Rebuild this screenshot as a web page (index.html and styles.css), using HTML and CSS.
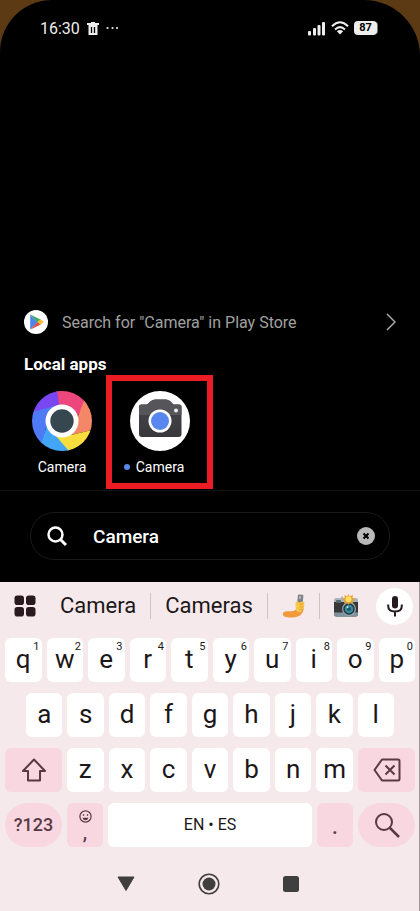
FILE: index.html
```
<!DOCTYPE html>
<html lang="en">

<head>
    <meta charset="utf-8" />
    <meta name="viewport" content="width=device-width, initial-scale=1" />
    <title>Camera search</title>
    <link rel="stylesheet" href="styles.css">
</head>

<body>
    <div class="screen">
        <header class="status">
            <span class="time">16:30</span>
            <svg class="trash" width="12" height="13" viewBox="0 0 12 13">
                <path d="M0 1h4V0h4v1h4v2H0z" fill="#eee" />
                <path d="M1.500 3h9v10h-9z" fill="#eee" />
                <path d="M4.500 5v6M7.500 5v6" stroke="#000" stroke-width="1.300" />
            </svg>
            <svg class="more" width="13" height="4" viewBox="0 0 13 4" fill="#eee">
                <circle cx="1.500" cy="2" r="1.100" />
                <circle cx="6.500" cy="2" r="1.100" />
                <circle cx="11" cy="2" r="1.100" />
            </svg>
            <svg class="signal" width="18" height="15" viewBox="0 0 18 15" fill="#eee">
                <rect x="0" y="10" width="3" height="4.500" rx="1" />
                <rect x="5" y="7" width="3" height="7.500" rx="1" />
                <rect x="9.500" y="4" width="3" height="10.500" rx="1" />
                <rect x="14" y="1" width="3" height="13.500" rx="1" />
            </svg>
            <svg class="wifi" width="18" height="14" viewBox="0 0 18 14" fill="none" stroke="#eee" stroke-width="2">
                <path d="M1 5.200Q9-2.600 17 5.200M4 8.400q5-4.600 10 0" />
                <path d="M9 13.500L5.800 10.300Q9 7.800 12.200 10.300z" fill="#eee" stroke="none" />
            </svg>
            <span class="battery">87</span>
        </header>

        <main class="results">
            <a class="store" href="#">
                <svg width="24" height="24" viewBox="0 0 24 24">
                    <circle cx="12" cy="12" r="12" fill="#fff" />
                    <path d="M6.200 4.800v14.600l7.400-7.200z" fill="#4b86e8" />
                    <path d="M6.200 4.500l10.800 5.200-3.400 2.800z" fill="#3fa865" />
                    <path d="M6.200 19.700l10.800-5.500-3.400-2.200z" fill="#e4483e" />
                    <path d="M16.300 9.300l3.700 2.800-3.700 2.500-3-2.500z" fill="#f4bc2f" />
                </svg>
                <span>Search for "Camera" in Play Store</span>
                <svg class="chevron" width="10" height="18" viewBox="0 0 10 18">
                    <path d="M1 1l8 8-8 8" fill="none" stroke="#aaa" stroke-width="1.500" />
                </svg>
            </a>

            <h2>Local apps</h2>
            <div class="apps">
                <button class="app" type="button">
                    <svg width="60" height="60" viewBox="0 0 60 60">
                        <defs>
                            <clipPath id="round"><circle cx="30" cy="30" r="30" /></clipPath>
                            <linearGradient id="body" x1="0" y1="0" x2="0" y2="1">
                                <stop offset="0" stop-color="#48484c" />
                                <stop offset="1" stop-color="#38383c" />
                            </linearGradient>
                        </defs>
                        <g clip-path="url(#round)">
                            <path d="M30 30L15 20-5 22V-5h30l14 20z" fill="#7847f2" />
                            <path d="M30 30L25 0H70L50 17 43 30z" fill="#ec467c" />
                            <path d="M35 15L25 0h-1l12 18 8 10 8-18-7-4z" fill="#ec467c" />
                            <path d="M52 10l13-5v38l-5-4-21 5 5-14z" fill="#f48768" />
                            <path d="M60 39l-21 5-18-2 16 20h28z" fill="#f9dc3d" />
                            <path d="M37 60L15 35 8 53l12 12h20z" fill="#42a5f5" />
                            <path d="M23 15L0 21v29l9 4 6-20z" fill="#4e79f7" />
                        </g>
                        <circle cx="30" cy="30" r="16.500" fill="#fff" />
                        <circle cx="30" cy="30" r="11.700" fill="#37474f" />
                    </svg>
                    <span class="name">Camera</span>
                </button>
                <button class="app picked" type="button">
                    <svg width="60" height="60" viewBox="0 0 60 60">
                        <circle cx="30" cy="30" r="30" fill="#fff" />
                        <path d="M9 16q0-2.500 2.500-2.500H17l4-3.500q2-1.500 4-1.500h11q2 0 4 1.500l3.500 3.500h5.500q2.500 0 2.500 2.500v27q0 3-3 3H12q-3 0-3-3z" fill="url(#body)" />
                        <path d="M9 24v-8q0-2.500 2.500-2.500H17l4-3.500q2-1.500 4-1.500h11q2 0 4 1.500l3.500 3.500h5.500q2.500 0 2.500 2.500v8z" fill="#56565a" />
                        <circle cx="30" cy="30" r="11.500" fill="#fff" />
                        <circle cx="30" cy="30" r="9" fill="#5787ef" />
                        <circle cx="46" cy="19.500" r="2" fill="#eee" />
                    </svg>
                    <span class="name dot">Camera</span>
                </button>
            </div>
        </main>

        <form class="search">
            <label class="field">
                <svg width="20" height="20" viewBox="0 0 20 20" fill="none" stroke="#fff" stroke-width="2.500">
                    <circle cx="8.500" cy="8.500" r="7" />
                    <path d="M13.500 13.500l5.500 5.500" stroke-width="3" />
                </svg>
                <input type="text" value="Camera" aria-label="Search apps">
                <button class="clear" type="button" aria-label="Clear">
                    <svg width="18" height="18" viewBox="0 0 18 18">
                        <circle cx="9" cy="9" r="9" fill="#b9b9b9" />
                        <path d="M6.500 6.500l5 5m0-5l-5 5" stroke="#000" stroke-width="2" />
                    </svg>
                </button>
            </label>
        </form>
    </div>

    <section class="keyboard">
        <div class="suggestions">
            <button class="tools" type="button" aria-label="Tools">
                <svg width="22" height="22" viewBox="0 0 22 22" fill="#291a1f">
                    <rect x="0.500" y="0.500" width="9.500" height="9.500" rx="2.800" />
                    <rect x="12" y="0.500" width="9.500" height="9.500" rx="2.800" />
                    <rect x="0.500" y="12" width="9.500" height="9.500" rx="2.800" />
                    <rect x="12" y="12" width="9.500" height="9.500" rx="2.800" />
                </svg>
            </button>
            <button class="word" type="button">Camera</button>
            <button class="word" type="button">Cameras</button>
            <button class="emoji" type="button" aria-label="Selfie">
                <svg width="24" height="24" viewBox="0 0 24 24">
                    <rect x="15.500" y="0.500" width="5.500" height="11" rx="1" fill="#7c8288" transform="rotate(5 18 6)" />
                    <rect x="17" y="2" width="2" height="3" rx="1" fill="#b6bdc2" />
                    <path d="M3.500 17.500c4-.8 8 .8 11-2.500l1.500-6 5.500 2.500c.8 4-.5 8.500-4.500 10.500-4.500 2-10.500 2-14.500.5-2.500-1-2-4.500 1-5z" fill="#f1993b" />
                    <path d="M13.500 8.500c1-1.500 2.500-1.500 3.500 0l4-1c2 0 1.800 2 .5 2.500 1.500.5 1.200 2.500 0 2.700 1 .8.500 2.300-.8 2.500l-2 3.300c-2.500 0-4.500-1.500-5-3.500z" fill="#f8c84a" />
                    <path d="M17.500 10h4m-4 2.800h3.500m-3.500 2.500h3" stroke="#d48a27" stroke-width=".8" />
                </svg>
            </button>
            <button class="emoji" type="button" aria-label="Camera with flash">
                <svg width="26" height="24" viewBox="0 0 26 24">
                    <path d="M3 4h5v-1.500h2V4h13q2 0 2 2v3H1V6q0-2 2-2z" fill="#a7b5bd" />
                    <path d="M1 8h24v12q0 2.500-2.500 2.500h-19Q1 22.500 1 20z" fill="#38383b" />
                    <path d="M1 18.500h24V20q0 2.500-2.500 2.500h-19Q1 22.500 1 20z" fill="#80939c" />
                    <rect x="3" y="6" width="5" height="3" rx="1" fill="#58666e" />
                    <circle cx="16" cy="15" r="7" fill="#90a3ac" />
                    <circle cx="16" cy="15" r="5.700" fill="#263238" />
                    <circle cx="16" cy="15" r="4.300" fill="#378ba0" />
                    <circle cx="16" cy="15" r="2" fill="#235463" />
                    <circle cx="14.500" cy="13.300" r="1" fill="#b8e6eb" />
                    <path d="M15.500 0l1.200 2.500L20 1l-.5 3.200 2.500 1-2.300 1.600.6 2.700-3-.8-1.800 2-1.500-2-3 .8.700-2.700L9 5.200l2.700-1.300L11.500 1l2.700 1.500z" fill="#f29b25" />
                    <circle cx="15.500" cy="5.200" r="3" fill="#ffe168" />
                </svg>
            </button>
            <button class="mic" type="button" aria-label="Voice typing">
                <svg width="16" height="21" viewBox="0 0 16 21">
                    <rect x="5" y="0" width="6" height="12.500" rx="3" fill="#261a1e" />
                    <path d="M1.200 8.500v1.500q0 5.500 6.800 5.500t6.800-5.500V8.500M8 15.500v5" fill="none" stroke="#261a1e" stroke-width="2" />
                </svg>
            </button>
        </div>

        <div class="row">
            <button class="key" type="button">q<sup>1</sup></button>
            <button class="key" type="button">w<sup>2</sup></button>
            <button class="key" type="button">e<sup>3</sup></button>
            <button class="key" type="button">r<sup>4</sup></button>
            <button class="key" type="button">t<sup>5</sup></button>
            <button class="key" type="button">y<sup>6</sup></button>
            <button class="key" type="button">u<sup>7</sup></button>
            <button class="key" type="button">i<sup>8</sup></button>
            <button class="key" type="button">o<sup>9</sup></button>
            <button class="key" type="button">p<sup>0</sup></button>
        </div>
        <div class="row inset">
            <button class="key" type="button">a</button>
            <button class="key" type="button">s</button>
            <button class="key" type="button">d</button>
            <button class="key" type="button">f</button>
            <button class="key" type="button">g</button>
            <button class="key" type="button">h</button>
            <button class="key" type="button">j</button>
            <button class="key" type="button">k</button>
            <button class="key" type="button">l</button>
        </div>
        <div class="row">
            <button class="key pink wide" type="button" aria-label="Shift">
                <svg width="26" height="24" viewBox="0 0 26 24" fill="none" stroke="#583944" stroke-width="2" stroke-linejoin="round">
                    <path d="M13 1.500L2 13h5v9.500h12V13h5z" />
                </svg>
            </button>
            <button class="key" type="button">z</button>
            <button class="key" type="button">x</button>
            <button class="key" type="button">c</button>
            <button class="key" type="button">v</button>
            <button class="key" type="button">b</button>
            <button class="key" type="button">n</button>
            <button class="key" type="button">m</button>
            <button class="key pink wide" type="button" aria-label="Backspace">
                <svg width="28" height="24" viewBox="0 0 28 24" fill="none" stroke="#583944" stroke-width="2" stroke-linejoin="round">
                    <path d="M9 1.500h16q1.500 0 1.500 1.500v18q0 1.500-1.500 1.500H9L1.500 12z" />
                    <path d="M12.500 7.500l9 9m0-9l-9 9" />
                </svg>
            </button>
        </div>
        <div class="row">
            <button class="key pink wide pill symbols" type="button">?123</button>
            <button class="key pink small comma" type="button">
                <svg width="13" height="13" viewBox="0 0 13 13" fill="none" stroke="#583944">
                    <circle cx="6.500" cy="6.500" r="5.600" stroke-width="1.200" />
                    <circle cx="4.500" cy="5" r=".5" />
                    <circle cx="8.500" cy="5" r=".5" />
                    <path d="M3.500 7.700h6q-.8 2.500-3 2.500t-3-2.500z" fill="#583944" stroke="none" />
                </svg>
                <span>,</span>
            </button>
            <button class="key space" type="button">EN • ES</button>
            <button class="key pink small" type="button">.</button>
            <button class="key pink wide pill" type="button" aria-label="Search">
                <svg width="26" height="26" viewBox="0 0 26 26" fill="none" stroke="#583944" stroke-width="2">
                    <circle cx="10" cy="10" r="8" />
                    <path d="M15.500 15.500L25 25" stroke-width="2.500" />
                </svg>
            </button>
        </div>

        <nav class="nav">
            <button type="button" aria-label="Back">
                <svg width="18" height="16" viewBox="0 0 18 16">
                    <path d="M1 1h16L9 14.500z" fill="#3f3f3f" stroke="#3f3f3f" stroke-linejoin="round" />
                </svg>
            </button>
            <button type="button" aria-label="Home">
                <svg width="22" height="22" viewBox="0 0 22 22">
                    <circle cx="11" cy="11" r="9.800" fill="none" stroke="#3f3f3f" stroke-width="1.600" />
                    <circle cx="11" cy="11" r="6.500" fill="#3f3f3f" />
                </svg>
            </button>
            <button type="button" aria-label="Recents">
                <svg width="16" height="16" viewBox="0 0 16 16">
                    <rect width="16" height="16" rx="2.500" fill="#3f3f3f" />
                </svg>
            </button>
        </nav>
    </section>
</body>

</html>
```

FILE: styles.css
```
* {
    box-sizing: border-box;
}

body {
    margin: 0;
    min-height: 100vh;
    display: flex;
    flex-direction: column;
    background-color: #5c3b14;
    font-family: Roboto, "Liberation Sans", sans-serif;
}

button {
    margin: 0;
    padding: 0;
    border: 0;
    background: none;
    color: inherit;
    font-family: inherit;
}

svg {
    display: block;
    flex: none;
}

.screen {
    flex: 1;
    display: flex;
    flex-direction: column;
    background-color: #000;
    border-radius: 52px 56px 0 0;
    color: #fff;
}

/* status bar */
.status {
    display: flex;
    align-items: center;
    height: 56px;
    padding: 0 43px 0 40px;
    color: #eee;
}

.time {
    font-size: 16px;
}

.trash {
    margin-left: 7px;
}

.more {
    margin-left: 7px;
}

.signal {
    margin-left: auto;
}

.wifi {
    margin: 0 5px;
}

.battery {
    width: 23px;
    height: 14px;
    border-radius: 4px;
    background-color: #eee;
    box-shadow: 2px 0 0 -1px #777;
    color: #000;
    font-size: 11px;
    font-weight: 700;
    line-height: 14px;
    text-align: center;
}

/* results */
.results {
    margin-top: auto;
    padding: 0 24px;
    border-bottom: 1px solid #121212;
}

.store {
    display: flex;
    align-items: center;
    gap: 14px;
    height: 24px;
    color: #a0a0a0;
    font-size: 16px;
    text-decoration: none;
}

.chevron {
    margin-left: auto;
}

.results h2 {
    margin: 20px 0 17px;
    font-size: 17px;
    font-weight: 700;
    line-height: 20px;
}

.apps {
    display: flex;
    gap: 22px;
    padding: 0 0 13px;
}

.app {
    position: relative;
    display: flex;
    flex-direction: column;
    align-items: center;
    gap: 6px;
    width: 76px;
}

.name {
    font-size: 14px;
    line-height: 20px;
}

.dot::before {
    content: "";
    display: inline-block;
    width: 6px;
    height: 6px;
    margin: 0 6px 2px -12px;
    border-radius: 50%;
    background-color: #5787e8;
}

.picked::after {
    content: "";
    position: absolute;
    inset: -16px -15px -12px -16px;
    border: 6px solid #ec1c24;
}

/* search field */
.search {
    padding: 21px 30px 22px;
}

.field {
    display: flex;
    align-items: center;
    height: 48px;
    padding: 0 14px 0 16px;
    border: 1px solid #191919;
    border-radius: 24px;
}

.field input {
    flex: 1;
    min-width: 0;
    margin-left: 26px;
    padding: 0;
    border: 0;
    outline: 0;
    background: none;
    color: #fff;
    font-family: inherit;
    font-size: 19px;
    font-weight: 500;
}

/* keyboard */
.keyboard {
    display: flex;
    flex-direction: column;
    gap: 11px;
    padding: 0 4px 0 5px;
    border-right: 1px solid #a1959a;
    background-color: #f6e9eb;
    color: #1c1719;
}

.suggestions {
    display: flex;
    align-items: center;
    height: 45px;
    padding: 3px 2px 0 9px;
}

.tools {
    margin-right: 10px;
}

.word {
    flex: 0 1 auto;
    height: 26px;
    padding: 0 14px;
    border-right: 1px solid #cfc2c5;
    font-size: 22px;
    line-height: 26px;
}

.emoji {
    display: flex;
    flex: 1;
    align-items: center;
    justify-content: center;
    height: 26px;
}

.emoji + .emoji {
    border-left: 1px solid #cfc2c5;
}

.mic {
    display: flex;
    align-items: center;
    justify-content: center;
    width: 37px;
    height: 37px;
    margin-left: 4px;
    border-radius: 50%;
    background-color: #fff;
}

.row {
    display: flex;
    gap: 5px;
}

.inset {
    padding: 0 21px;
}

.key {
    position: relative;
    display: flex;
    flex: 1;
    align-items: center;
    justify-content: center;
    min-width: 0;
    height: 44px;
    padding-bottom: 3px;
    border-radius: 6px;
    background-color: #fff;
    font-size: 26px;
    line-height: 30px;
}

.key sup {
    position: absolute;
    top: 3px;
    right: 2px;
    font-size: 11px;
    line-height: 12px;
}

.pink {
    padding-bottom: 0;
    background-color: #f8d7e1;
    color: #583944;
}

.wide {
    flex: 0 0 57px;
}

.small {
    flex: 0 0 36px;
}

.pill {
    border-radius: 22px;
}

.symbols {
    font-size: 18px;
    font-weight: 500;
}

.comma {
    flex-direction: column;
}

.comma span {
    font-size: 22px;
    line-height: 18px;
}

.space {
    padding-bottom: 0;
    font-size: 16px;
}

.nav {
    display: flex;
    justify-content: center;
    align-items: center;
    gap: 63px;
    height: 53px;
    padding: 0 5px 2px 0;
}
```
